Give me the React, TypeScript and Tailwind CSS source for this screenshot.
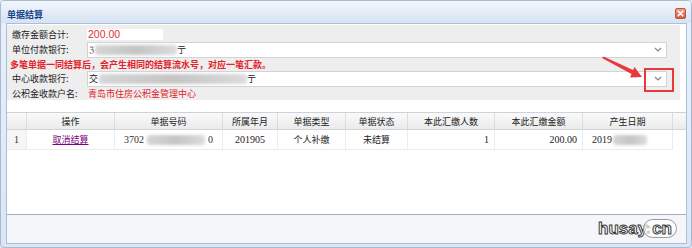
import React from "react";

const Blur = ({ w, h = 9, className = "" }: { w: number; h?: number; className?: string }) => (
  <span
    className={"inline-block align-middle rounded-[3px] blur-[1.5px] bg-gradient-to-r from-[#d6d6d6] via-[#c4c4c4] to-[#dcdcdc] " + className}
    style={{ width: w, height: h }}
  />
);

const Chevron = () => (
  <svg width="8" height="5" viewBox="0 0 8 5" className="block">
    <path d="M1 1 L4 4 L7 1" fill="none" stroke="#7d8796" strokeWidth="1.2" />
  </svg>
);

const cols = [
  { w: 20, h: "", align: "center" },
  { w: 88, h: "操作", align: "center" },
  { w: 108, h: "单据号码", align: "left" },
  { w: 55, h: "所属年月", align: "center" },
  { w: 68, h: "单据类型", align: "center" },
  { w: 62, h: "单据状态", align: "center" },
  { w: 87, h: "本此汇缴人数", align: "right" },
  { w: 88, h: "本此汇缴金额", align: "right" },
  { w: 90, h: "产生日期", align: "left" },
];

export default function App() {
  const row: React.ReactNode[] = [
    <span className="text-[#333]">1</span>,
    <span className="text-[#800080] underline">取消结算</span>,
    <span className="flex items-center text-[#333]">
      <span>3702</span>
      <Blur w={58} h={10} className="ml-[3px] mr-[3px]" />
      <span>0</span>
    </span>,
    <span>201905</span>,
    <span>个人补缴</span>,
    <span>未结算</span>,
    <span>1</span>,
    <span>200.00</span>,
    <span className="flex items-center">
      <span>2019</span>
      <Blur w={34} h={10} className="ml-[1px]" />
    </span>,
  ];

  return (
    <div className="relative w-[692px] h-[248px] bg-[#e4ecf7] font-[Noto_Sans_CJK_SC,sans-serif] text-[9px] leading-none text-[#222]">
      <div className="h-full flex flex-col border border-[#a8bad3] rounded-[4px] overflow-hidden bg-gradient-to-b from-[#e9f0fa] to-[#dbe6f4]">
        {/* header */}
        <div className="h-[22px] flex items-center justify-between pl-[6px] pr-[4px] bg-gradient-to-b from-[#f2f6fc] to-[#d6e3f3]">
          <span className="font-bold text-[#15428b] text-[9px] mt-[4px]">单据结算</span>
          <span className="w-[11px] h-[11px] rounded-[2px] bg-gradient-to-b from-[#f0a085] to-[#cf5a37] border border-[#b9553a] flex items-center justify-center mt-[3px] mr-[1px]">
            <svg width="7" height="7" viewBox="0 0 7 7">
              <path d="M1.2 1.2 L5.8 5.8 M5.8 1.2 L1.2 5.8" stroke="#fff" strokeWidth="1.6" strokeLinecap="round" />
            </svg>
          </span>
        </div>
        {/* body */}
        <div className="flex-1 flex flex-col pl-[5px] pr-[4px] pb-[3px]">
          <div className="flex-1 flex flex-col border border-[#a9bfdc] bg-white">
            <div className="flex-1 flex flex-col">
              {/* form */}
              <div className="h-[76px] mr-[6px] bg-[#eeeeee] pt-[3px] pl-[5px] flex flex-col border-t border-white">
                <div className="h-[13px] flex items-center">
                  <span className="w-[75px]">缴存金额合计:</span>
                  <span className="w-[76px] h-[11px] bg-white flex items-center pl-[1px] text-[#e02f2f] font-[Liberation_Sans,sans-serif] text-[10.5px]">200.00</span>
                </div>
                <div className="h-[17px] flex items-center">
                  <span className="w-[75px]">单位付款银行:</span>
                  <span className="w-[580px] h-[16px] bg-white border border-[#cfd3da] flex items-center justify-between pl-[1px] pr-[4px]">
                    <span className="flex items-center">
                      <span className="text-[#555]">ℨ</span>
                      <Blur w={82} h={10} className="ml-[1px]" />
                      <span>亍</span>
                    </span>
                    <Chevron />
                  </span>
                </div>
                <div className="h-[12px] flex items-center -ml-[2px] font-bold text-[#e3232a]">
                  多笔单据一同结算后，会产生相同的结算流水号，对应一笔汇款。
                </div>
                <div className="h-[17px] flex items-center">
                  <span className="w-[75px]">中心收款银行:</span>
                  <span className="w-[580px] h-[16px] bg-white border border-[#cfd3da] flex items-center justify-between pl-[1px] pr-[4px]">
                    <span className="flex items-center">
                      <span>交</span>
                      <Blur w={148} h={10} className="ml-[1px]" />
                      <span>亍</span>
                    </span>
                    <Chevron />
                  </span>
                </div>
                <div className="h-[12px] flex items-center">
                  <span className="w-[76px]">公积金收款户名:</span>
                  <span className="text-[#e3232a]">青岛市住房公积金管理中心</span>
                </div>
              </div>
              <div className="h-[12px]" />
              {/* table */}
              <div className="border-t border-[#c9d3df]">
                <div className="flex h-[17px] bg-gradient-to-b from-[#fafafa] to-[#ebebeb] border-b border-[#d4d4d4]">
                  {cols.map((c, i) => (
                    <div
                      key={i}
                      className="flex items-center justify-center border-r border-[#dcdcdc] text-[#222]"
                      style={{ width: c.w }}
                    >
                      {c.h}
                    </div>
                  ))}
                  <div className="flex-1" />
                </div>
                <div className="flex h-[20px]">
                  {cols.map((c, i) => (
                    <div
                      key={i}
                      className={
                        "flex items-center border-r border-b border-[#ececec] " +
                        (c.align === "center"
                          ? "justify-center"
                          : c.align === "right"
                          ? "justify-end pr-[5px]"
                          : "justify-start pl-[9px]") +
                        (i === 0 ? " bg-[#f6f6f6] font-[Liberation_Serif,serif] text-[10px]" : "") +
                        (i === 3 || i >= 6 ? " font-[Liberation_Serif,serif] text-[10px]" : "") +
                        (i === 2 ? " font-[Liberation_Serif,serif] text-[10px]" : "")
                      }
                      style={{ width: c.w }}
                    >
                      {row[i]}
                    </div>
                  ))}
                </div>
              </div>
            </div>
            {/* footer */}
            <div className="h-[29px] border-t border-[#a3acba] bg-[#f4f6fa]" />
          </div>
        </div>
      </div>

      {/* annotation: red box and arrow */}
      <div className="absolute left-[644px] top-[68px] w-[30px] h-[24px] border-2 border-[#e5393b]" />
      <svg className="absolute left-[600px] top-[56px]" width="46" height="26" viewBox="0 0 46 26">
        <polygon points="2,2 3.5,0.5 33,14 34.5,11 42,21 30,21.5 31.5,18" fill="#e8393a" />
      </svg>

      {/* watermark */}
      <div className="absolute left-[598px] top-[219px] flex items-center font-bold font-[Liberation_Sans,sans-serif] text-[17px] leading-none text-white [-webkit-text-stroke:1px_#3a3a3a]">
        <span>husay</span>
        <span className="text-[12px] -mx-[1px]">:</span>
        <span className="rounded-full border border-[#9a9a9a] bg-white/70 px-[4px] -ml-[6px] pl-[8px]">cn</span>
      </div>
    </div>
  );
}
